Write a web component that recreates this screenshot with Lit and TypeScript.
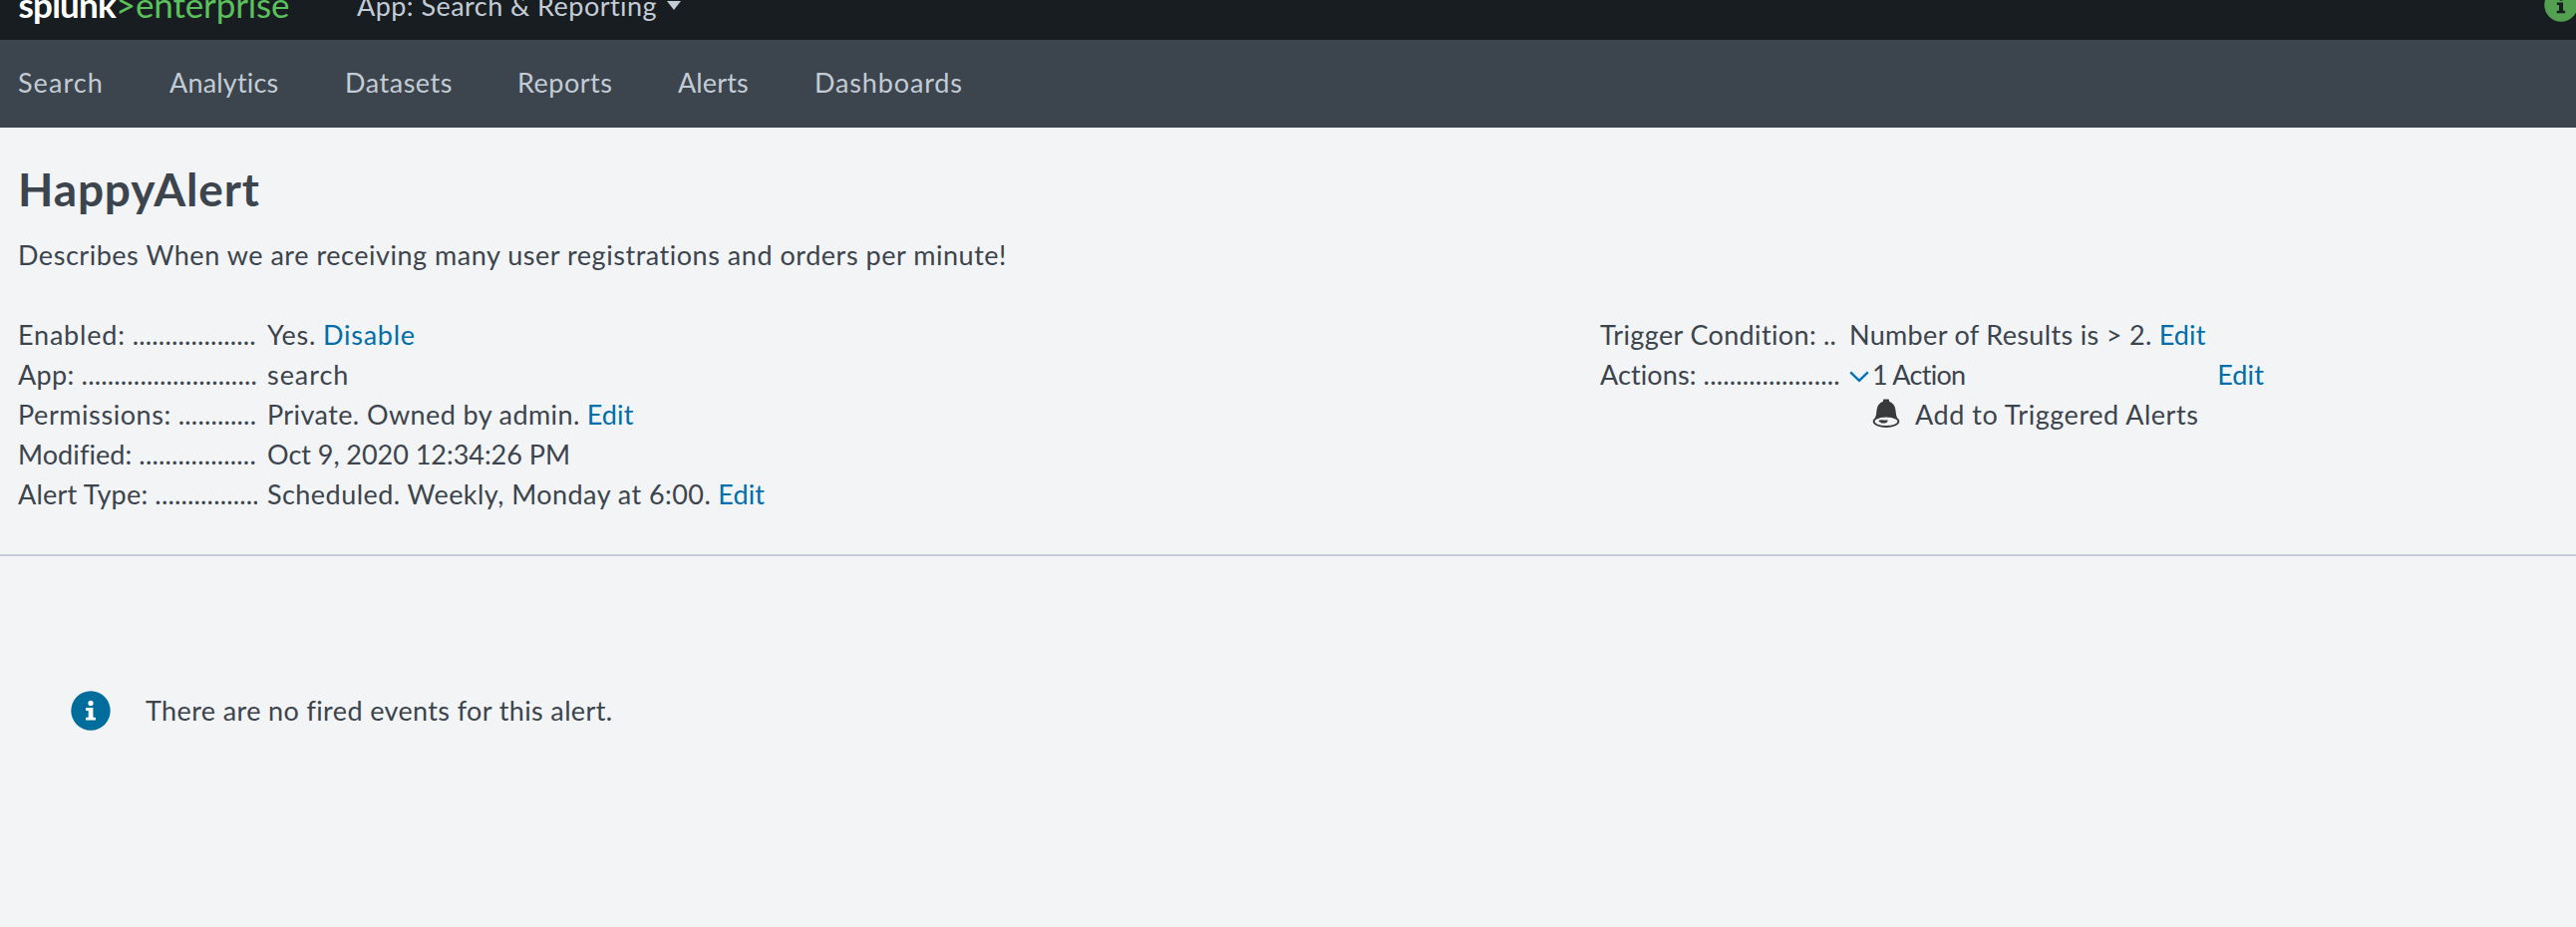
import { LitElement, html, css, svg } from "lit";
import { customElement } from "lit/decorators.js";

interface Run { text: string; ls: number; link?: boolean; }
interface Field { label: Run; dots: number; value: Run[]; }

const NAV: Run[] = [
  { text: "Search", ls: 1.05 },
  { text: "Analytics", ls: 0.18 },
  { text: "Datasets", ls: 0.53 },
  { text: "Reports", ls: 0.51 },
  { text: "Alerts", ls: 0.13 },
  { text: "Dashboards", ls: 0.85 },
];

const DETAILS: Field[] = [
  { label: { text: "Enabled:", ls: 0.8 }, dots: 20, value: [{ text: "Yes.", ls: 0.72 }, { text: "Disable", ls: 0.73, link: true }] },
  { label: { text: "App:", ls: 0.34 }, dots: 27, value: [{ text: "search", ls: 0.95 }] },
  { label: { text: "Permissions:", ls: 0.57 }, dots: 12, value: [{ text: "Private. Owned by admin.", ls: 0.4 }, { text: "Edit", ls: 0.12, link: true }] },
  { label: { text: "Modified:", ls: 0.08 }, dots: 19, value: [{ text: "Oct 9, 2020 12:34:26 PM", ls: -0.04 }] },
  { label: { text: "Alert Type:", ls: 0.2 }, dots: 16, value: [{ text: "Scheduled. Weekly, Monday at 6:00.", ls: 0.45 }, { text: "Edit", ls: 0.12, link: true }] },
];

const infoGlyph = svg`
  <circle cx="20" cy="20" r="19.7" fill="currentColor"></circle>
  <circle class="mark" cx="20" cy="12.4" r="2.6"></circle>
  <path class="mark" d="M15.1 17.1H22.4V26.7H24.9V29.6H15V26.7H17.7V20H15.1Z"></path>`;

@customElement("app-root")
export class AppRoot extends LitElement {
  static styles = css`
    :host { display: block; height: 930px; overflow: hidden; background: #f2f4f5; color: #3c444d;
      font: 400 27px/40px Lato, "Open Sans", sans-serif; font-kerning: normal; }
    .text { white-space: pre; }
    .link { color: #006eaa; cursor: pointer; }
    .topbar { height: 40px; overflow: hidden; display: flex; align-items: flex-start; background: #171d21; color: #c3cbd4; }
    .logo { margin: -16px 0 0 18.5px; width: 339.5px; font-size: 35px; white-space: pre; }
    .brand { font-weight: 700; color: #fff; letter-spacing: -0.8px; }
    .edition { color: #5cc05c; letter-spacing: -0.15px; }
    .appmenu { margin-top: -14px; letter-spacing: 0.46px; }
    .caret { margin: 1px 0 0 10px; width: 14px; height: 9px; fill: #c3cbd4; }
    .health { margin: -12px -2px 0 auto; width: 34px; height: 34px; color: #53a051; }
    .health .mark { fill: #171d21; }
    .nav { height: 88px; padding: 0 18px 2px; box-sizing: border-box; display: grid; align-items: center;
      grid-template-columns: 152px 176px 173px 161px 137px auto; justify-content: start; background: #3c444d; color: #c3cbd4; }
    .summary { padding: 0 18px; height: 428px; box-sizing: border-box; }
    .title { margin: 0; padding-top: 32px; font-size: 46px; font-weight: 700; line-height: 60px; letter-spacing: 0.85px; }
    .desc { margin: 16px 0 40px; letter-spacing: 0.53px; }
    .columns { display: grid; grid-template-columns: 1587px 1fr; }
    .field { display: grid; grid-template-columns: 240px auto; column-gap: 10px; justify-content: start; }
    .label { display: flex; gap: 7px; overflow: hidden; white-space: pre; }
    .dots { letter-spacing: 0.16px; }
    .value { display: flex; gap: 7px; }
    .toggle { display: flex; width: 416px; }
    .chevron { width: 20px; height: 12px; margin: 16px 3px 0 0; }
    .count { letter-spacing: -0.7px; }
    .edit { margin-left: auto; }
    .action { display: flex; margin-left: 272.5px; }
    .bell { width: 28px; height: 30px; margin: 4px 15.5px 0 0; }
    .rule { height: 2px; background: #c3cbd4; }
    .notice { display: flex; align-items: center; gap: 35px; padding: 135px 0 0 71px; }
    .info { width: 40px; height: 40px; color: #006d9c; }
    .info .mark { fill: #fff; }
    .empty { letter-spacing: 0.37px; }
  `;

  private run(r: Run) {
    return html`<span class="text ${r.link ? "link" : ""}" style="letter-spacing:${r.ls}px">${r.text}</span>`;
  }

  private label(r: Run, count: number) {
    return html`<div class="label">${this.run(r)}<span class="dots">${".".repeat(count)}</span></div>`;
  }

  render() {
    return html`
      <header class="topbar">
        <div class="logo"><span class="brand">splunk</span><span class="edition">&gt;enterprise</span></div>
        <span class="text appmenu">App: Search &amp; Reporting</span>
        <svg class="caret" viewBox="0 0 14 9"><path d="M0 0H14L7 9Z"></path></svg>
        <svg class="health" viewBox="0 0 40 40">${infoGlyph}</svg>
      </header>
      <nav class="nav">${NAV.map((r) => this.run(r))}</nav>
      <section class="summary">
        <h1 class="title">HappyAlert</h1>
        <p class="desc">Describes When we are receiving many user registrations and orders per minute!</p>
        <div class="columns">
          <div>
            ${DETAILS.map((f) => html`<div class="field">${this.label(f.label, f.dots)}<div class="value">${f.value.map((v) => this.run(v))}</div></div>`)}
          </div>
          <div>
            <div class="field">
              ${this.label({ text: "Trigger Condition:", ls: 0.36 }, 2)}
              <div class="value">${this.run({ text: "Number of Results is > 2.", ls: 0.33 })}${this.run({ text: "Edit", ls: 0.12, link: true })}</div>
            </div>
            <div class="field">
              ${this.label({ text: "Actions:", ls: 0.1 }, 21)}
              <div class="toggle">
                <svg class="chevron" viewBox="0 0 20 12"><path d="M1.2 1.4L10 9.8L18.8 1.4" fill="none" stroke="#0073b7" stroke-width="2.4"></path></svg>
                <span class="text count">1 Action</span>
                <span class="edit">${this.run({ text: "Edit", ls: 0.12, link: true })}</span>
              </div>
            </div>
            <div class="action">
              <svg class="bell" viewBox="0 0 28 30">
                <path fill="#38393a" d="M11 2.8V1.4Q11 .6 11.8 .6H16.2Q17 .6 17 1.4V2.8Q22.8 5 23.4 11Q23.6 16 25.4 20.4Q20 17.9 14 17.9T2.6 20.4Q4.4 16 4.6 11Q5.2 5 11 2.8Z"></path>
                <ellipse cx="14" cy="22.8" rx="12.4" ry="5.2" fill="none" stroke="#38393a" stroke-width="1.8"></ellipse>
                <path fill="#38393a" d="M6.6 22.6Q6.8 21 9.5 21.2Q12.5 21.9 15.8 21.4Q15.2 24.6 11 24.6Q8.2 24.6 8.6 23.5Q6.8 23.8 6.6 22.6Z"></path>
              </svg>
              ${this.run({ text: "Add to Triggered Alerts", ls: 0.53 })}
            </div>
          </div>
        </div>
      </section>
      <div class="rule"></div>
      <div class="notice">
        <svg class="info" viewBox="0 0 40 40">${infoGlyph}</svg>
        <span class="text empty">There are no fired events for this alert.</span>
      </div>
    `;
  }
}
